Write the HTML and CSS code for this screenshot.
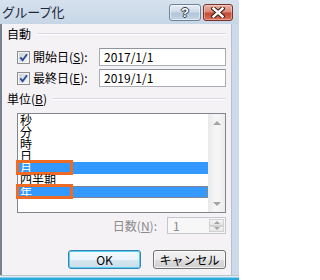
FILE: index.html
```html
<!DOCTYPE html>
<html lang="ja">
<head>
<meta charset="utf-8">
<link rel="stylesheet" href="styles.css">
</head>
<body>
<div class="window">
  <div class="titlebar">
    <span class="title">グループ化</span>
    <div class="caption-btns">
      <div class="cbtn help"><span class="qmark">?</span></div>
      <div class="cbtn close">
        <svg width="14" height="11" viewBox="0 0 14 11">
          <path d="M2.5 1.5 L11.5 9.5 M11.5 1.5 L2.5 9.5" stroke="#3a1a16" stroke-width="4.4" stroke-linecap="square"/>
          <path d="M2.5 1.5 L11.5 9.5 M11.5 1.5 L2.5 9.5" stroke="#ffffff" stroke-width="2.4" stroke-linecap="square"/>
        </svg>
      </div>
    </div>
  </div>
  <div class="client">
    <div class="group-head"><span>自動</span><div class="rule"></div></div>
    <div class="field-row">
      <div class="check">
        <svg class="box" width="13" height="13" viewBox="0 0 13 13">
          <defs>
            <linearGradient id="cg" x1="0" y1="0" x2="1" y2="1">
              <stop offset="0" stop-color="#cdd2d8"/>
              <stop offset="1" stop-color="#f5f6f7"/>
            </linearGradient>
          </defs>
          <rect x="0.5" y="0.5" width="12" height="12" fill="#f4f4f4" stroke="#8e8f8f"/>
          <rect x="2" y="2" width="9" height="9" fill="url(#cg)"/>
          <path d="M3.3 6.4 L5.6 9.2 L10 3.2" fill="none" stroke="#2c4a95" stroke-width="1.9"/>
        </svg>
        <span class="lbl">開始日(<u>S</u>):</span>
      </div>
      <div class="textbox">2017/1/1</div>
    </div>
    <div class="field-row second">
      <div class="check">
        <svg class="box" width="13" height="13" viewBox="0 0 13 13">
          <rect x="0.5" y="0.5" width="12" height="12" fill="#f4f4f4" stroke="#8e8f8f"/>
          <rect x="2" y="2" width="9" height="9" fill="url(#cg)"/>
          <path d="M3.3 6.4 L5.6 9.2 L10 3.2" fill="none" stroke="#2c4a95" stroke-width="1.9"/>
        </svg>
        <span class="lbl">最終日(<u>E</u>):</span>
      </div>
      <div class="textbox">2019/1/1</div>
    </div>
    <div class="group-head unit"><span>単位(<u>B</u>)</span><div class="rule"></div></div>
    <div class="listbox">
      <div class="items">
        <div class="item">秒</div>
        <div class="item">分</div>
        <div class="item">時</div>
        <div class="item">日</div>
        <div class="item sel"><span class="mark"></span>月</div>
        <div class="item">四半期</div>
        <div class="item sel focus"><span class="mark"></span>年</div>
      </div>
      <div class="scrollbar">
        <div class="sarrow"><span class="tri up"></span></div>
        <div class="sarrow"><span class="tri down"></span></div>
      </div>
    </div>
    <div class="days-row">
      <span class="days-label">日数(<u>N</u>):</span>
      <div class="spin">
        <span class="spin-val">1</span>
        <div class="spin-btns">
          <div class="sb"><span class="tri up small"></span></div>
          <div class="sb"><span class="tri down small"></span></div>
        </div>
      </div>
    </div>
    <div class="btn-row">
      <div class="btn default">OK</div>
      <div class="btn">キャンセル</div>
    </div>
  </div>
  <div class="bottom-frame"></div>
</div>
</body>
</html>
```
FILE: styles.css
```css
html, body {
  margin: 0;
  padding: 0;
}
body {
  width: 239px;
  height: 280px;
  overflow: hidden;
  font-family: "Noto Sans CJK JP", "Noto Sans", sans-serif;
  font-size: 12px;
  color: #000;
}
.window {
  width: 239px;
  height: 280px;
  display: flex;
  flex-direction: column;
  background: #cddbe9;
}
.titlebar {
  height: 24px;
  display: flex;
  align-items: center;
  padding-left: 2px;
  padding-right: 6px;
  background: linear-gradient(#d6e1ed, #c7d6e6);
  flex: none;
}
.title {
  font-size: 13px;
  line-height: 14px;
  color: #1b2a3b;
  letter-spacing: -0.4px;
}
.caption-btns {
  margin-left: auto;
  display: flex;
  gap: 2px;
}
.cbtn {
  height: 17px;
  border-radius: 3px;
  display: flex;
  align-items: center;
  justify-content: center;
  box-sizing: border-box;
}
.help {
  width: 32px;
  border: 1px solid #6e8299;
  background: linear-gradient(#e6edf5 0%, #cfdbe8 45%, #b3c5da 55%, #c5d5e6 100%);
  box-shadow: inset 0 0 0 1px rgba(255,255,255,0.5);
}
.qmark {
  font-family: "Liberation Sans", sans-serif;
  font-weight: bold;
  font-size: 13px;
  line-height: 13px;
  color: #fff;
  text-shadow: -1px 0 #2d3a4a, 1px 0 #2d3a4a, 0 -1px #2d3a4a, 0 1px #2d3a4a;
}
.close {
  width: 30px;
  border: 1px solid #7c3127;
  background: linear-gradient(#eab0a2 0%, #dc8a77 45%, #c44a34 55%, #d8725a 100%);
  box-shadow: inset 0 0 0 1px rgba(255,255,255,0.35);
}
.client {
  flex: none;
  width: 232px;
  height: 251px;
  box-sizing: border-box;
  border-left: 2px solid #76838f;
  border-right: 1px solid #b7c0ca;
  background: #f5f2f6;
  padding: 3px 5px 0 5px;
  display: flex;
  flex-direction: column;
}
.bottom-frame {
  height: 5px;
  border-top: 1px solid #bcc4cd;
  background: linear-gradient(#e4ecf4 0, #e4ecf4 1px, #2eaee0 2px, #27a6da 100%);
}
.group-head {
  display: flex;
  align-items: center;
  height: 14px;
  line-height: 14px;
}
.group-head .rule {
  flex: 1;
  height: 0;
  border-top: 1px solid #d8d8e4;
  border-bottom: 1px solid #ffffff;
  margin-left: 6px;
}
.group-head.unit {
  margin-top: 5px;
}
.field-row {
  display: flex;
  align-items: center;
  height: 18px;
  margin-top: 7px;
  padding-left: 10px;
}
.field-row.second {
  margin-top: 3px;
}
.check {
  display: flex;
  align-items: center;
  width: 82px;
  line-height: 14px;
}
.box {
  flex: none;
  margin-right: 3px;
}
.textbox {
  flex: 1;
  height: 18px;
  box-sizing: border-box;
  border: 1px solid #a9aeb6;
  border-top-color: #8f959e;
  background: #fff;
  padding-left: 4px;
  line-height: 16px;
  font-size: 12px;
}
.listbox {
  margin-top: 7px;
  margin-left: 10px;
  height: 100px;
  box-sizing: border-box;
  border: 1px solid #82878f;
  background: #fff;
  display: flex;
}
.items {
  flex: 1;
  padding-top: 0;
}
.item {
  position: relative;
  height: 12px;
  line-height: 12px;
  padding-left: 2px;
  font-size: 12px;
  white-space: nowrap;
}
.item.sel {
  background: #3399ff;
  color: #fff;
}
.item.focus {
  outline: 1px dotted #c9782e;
  outline-offset: -1px;
}
.mark {
  position: absolute;
  left: -2px;
  top: -2px;
  width: 57px;
  height: 15px;
  box-sizing: border-box;
  border: 3px solid #ef6a22;
}
.scrollbar {
  width: 17px;
  flex: none;
  display: flex;
  flex-direction: column;
  justify-content: space-between;
  background: linear-gradient(90deg, #e9e9e9, #f5f5f5 40%, #f5f5f5 60%, #ececec);
}
.sarrow {
  height: 17px;
  display: flex;
  align-items: center;
  justify-content: center;
}
.tri {
  width: 0;
  height: 0;
  border-left: 4px solid transparent;
  border-right: 4px solid transparent;
}
.tri.up {
  border-bottom: 4px solid #a4a4a4;
}
.tri.down {
  border-top: 4px solid #a4a4a4;
}
.tri.small {
  border-left-width: 3px;
  border-right-width: 3px;
}
.tri.small.up {
  border-bottom-width: 3px;
}
.tri.small.down {
  border-top-width: 3px;
}
.days-row {
  margin-top: 4px;
  height: 17px;
  display: flex;
  align-items: center;
  justify-content: flex-end;
}
.days-label {
  color: #8a8a8a;
  line-height: 14px;
  margin-right: 10px;
}
.spin {
  width: 59px;
  height: 17px;
  box-sizing: border-box;
  border: 1px solid #c3c6ca;
  background: #f7f7f7;
  display: flex;
}
.spin-val {
  flex: 1;
  color: #8a8a8a;
  line-height: 15px;
  padding-left: 5px;
}
.spin-btns {
  width: 15px;
  display: flex;
  flex-direction: column;
  padding: 1px 1px 1px 0;
  gap: 0;
}
.sb {
  flex: 1;
  display: flex;
  align-items: center;
  justify-content: center;
  background: linear-gradient(#f4f4f4, #e4e4e4);
  border: 1px solid #d2d2d2;
}
.btn-row {
  margin-top: 16px;
  display: flex;
  justify-content: flex-end;
  gap: 12px;
}
.btn {
  width: 73px;
  height: 19px;
  box-sizing: border-box;
  border: 1px solid #707070;
  border-radius: 3px;
  background: linear-gradient(#f2f2f2 0%, #ebebeb 50%, #dddddd 51%, #cfcfcf 100%);
  box-shadow: inset 0 0 0 1px rgba(255,255,255,0.7);
  text-align: center;
  line-height: 17px;
  font-size: 12px;
}
.btn.default {
  border-color: #3c7fb1;
  box-shadow: inset 0 0 0 1px #53d2f2;
  background: linear-gradient(#f2f9fd 0%, #eaf4fa 50%, #d8e8f2 51%, #cbdde9 100%);
}
```
